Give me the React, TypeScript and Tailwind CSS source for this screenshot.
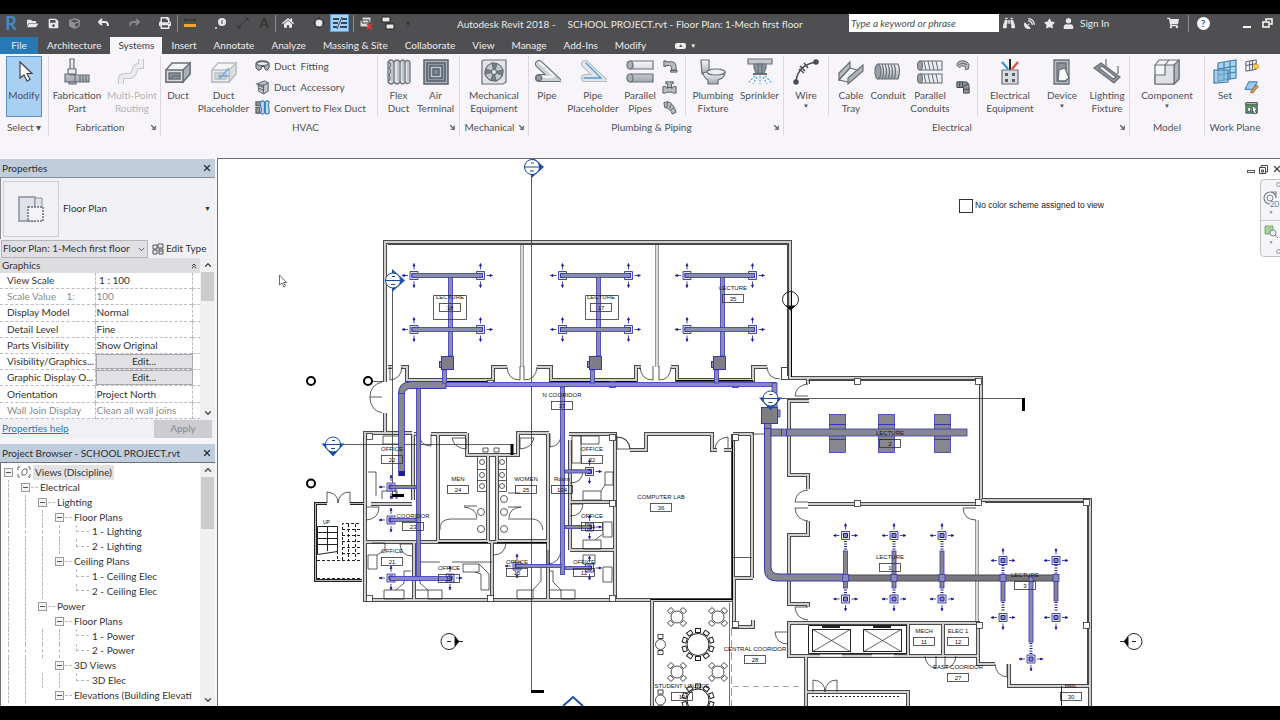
import React from "react";
import { ChevronDown, ChevronUp, ChevronsUp, X } from "lucide-react";
import {
  FaFolderOpen,
  FaSave,
  FaCube,
  FaPrint,
  FaHome,
  FaSatelliteDish,
  FaStar,
  FaUser,
  FaShoppingCart,
  FaBinoculars,
} from "react-icons/fa";

/* ------------------------------------------------------------------ */
/* Ribbon icons                                                        */
/* ------------------------------------------------------------------ */

const INK = "#6a6f77";
const METAL = "url(#metal)";

const icons: Record<string, React.ReactNode> = {
  cursor: <path d="M10 4v16l4-3 3 6 3-1.500-3-6h5z" fill="#fff" stroke="#444" strokeWidth="1.200" />,
  fabrication: (
    <g fill={METAL} stroke={INK} strokeWidth="1.200">
      <path d="M7 1h4v16H7zM2 16h10v8H2zM12 17h14v7H12z" />
      <path d="M5 11h8v5H5zM6 24h7v2H6zM17 17v7M20 17v7M23 17v7" />
    </g>
  ),
  multipoint: (
    <g fill="none">
      <path d="M3 26v-5q0-3 4-3h4q4 0 5-4l1-3q1-3 4-3h2V1" stroke="#c3c5c9" strokeWidth="6" />
      <path d="M3 26v-5q0-3 4-3h4q4 0 5-4l1-3q1-3 4-3h2V1" stroke="#ececf0" strokeWidth="4" />
    </g>
  ),
  duct: (
    <g stroke={INK} strokeWidth="1.400">
      <path d="M2 12 8 5h18v11l-7 8H2z" fill="#f4f5f7" />
      <path d="M19 12l7-7v11l-7 8z" fill="#a9afb7" />
      <path d="M2 12h17v12H2z" fill="#d5d8dd" />
      <path d="M5 15h11v6H5z" fill="#8d949d" />
      <path d="M5 21l4-3h7" fill="none" />
    </g>
  ),
  ductPlaceholder: (
    <g stroke="#babdc2" strokeWidth="1.300">
      <path d="M2 12 8 5h18v11l-7 8H2z" fill="#f4f5f7" />
      <path d="M19 12l7-7v11l-7 8z" fill="#dcdee2" />
      <path d="M2 12h17v12H2z" fill="#e8e9ec" />
      <path d="M5 15h11v6H5z" fill="#d3d6da" />
      <path d="M8 18h11M9 21 19 10" stroke="#6fa6d8" />
    </g>
  ),
  flexDuct: (
    <g stroke={INK} strokeWidth="1.300">
      <path d="M3 4q3-4 6 0 3-4 6 0 3-4 5 0 3-3 5 0v20q-2 3-5 0-2 4-5 0-3 4-6 0-3 4-6 0z" fill="#e1e4e8" />
      <path d="M4 4q3 3 0 6 3 3 0 7 2 3 0 6M9 4v20M15 4v20M20 4v20" fill="none" />
      <path d="M7 4v19M13 4v19M18 4v19M23 4v19" stroke="#b1b6bd" />
    </g>
  ),
  airTerminal: (
    <g stroke="#59616b" strokeWidth="1.500">
      <path d="M2 2h24v24H2z" fill="#a9b1bb" />
      <path d="M5 5h18v18H5z" fill="#8e98a4" />
      <path d="M8 8h12v12H8z" fill="#b9c1ca" />
      <path d="M11 11h6v6h-6z" fill="#7e8894" />
    </g>
  ),
  mechanical: (
    <g stroke={INK} strokeWidth="1.200">
      <path d="M2 3l2-1h22v22l-3 2H2z" fill="#e3e5e9" />
      <circle cx="14" cy="14" r="9" fill="#c3c8ce" />
      <path d="M14 14 12 5l5 1zM14 14l9-2-1 5zM14 14l2 9-5-1zM14 14l-9 2 1-5z" fill="#78818b" />
      <circle cx="14" cy="14" r="2.500" fill="#e8eaed" />
    </g>
  ),
  pipe: (
    <g fill="none" strokeLinecap="round">
      <path d="M6 6 21 20H6" stroke={INK} strokeWidth="8" />
      <path d="M6 6 21 20H6" stroke="#cdd1d6" strokeWidth="6" />
      <path d="M7 5 21 18M6 19h13" stroke="#f5f6f8" strokeWidth="2" />
      <circle cx="6" cy="20" r="3" fill="#9299a1" stroke={INK} />
    </g>
  ),
  pipePlaceholder: (
    <g fill="none" strokeLinecap="round">
      <path d="M6 6 21 20H6" stroke="#b6babf" strokeWidth="8" />
      <path d="M6 6 21 20H6" stroke="#e3e5e9" strokeWidth="6" />
      <path d="M7 5 22 20H5" stroke="#4f9bdc" strokeWidth="1.300" />
    </g>
  ),
  parallelPipes: (
    <g stroke={INK} strokeWidth="1.200">
      <path d="M5 3h22v8H5zM5 16h22v8H5z" fill={METAL} />
      <ellipse cx="4" cy="7" rx="3" ry="4" fill="#aab0b7" />
      <ellipse cx="4" cy="20" rx="3" ry="4" fill="#aab0b7" />
    </g>
  ),
  toilet: (
    <g fill={METAL} stroke={INK} strokeWidth="1.200">
      <path d="M2 2h8v14H3z" />
      <path d="M8 14h18q0 6-7 8v4H9v-4q-4-2-5-7z" />
      <ellipse cx="17" cy="14" rx="9" ry="3" fill="#eef0f2" />
    </g>
  ),
  sprinkler: (
    <g stroke={INK} strokeWidth="1.200">
      <path d="M2 1h24v5H2z" fill="#c6cad0" />
      <path d="M8 6h12v4l-2 5h-8l-2-5zM12 6v10M16 6v10" fill="#8d949d" />
      <path d="M7 16h14" strokeWidth="2" />
      <path d="m9 18-7 7M11 19l-4 7M14 18v8M17 19l4 7M19 18l7 7" stroke="#4f9bdc" strokeDasharray="2 1.500" />
    </g>
  ),
  wire: (
    <g fill="none" stroke="#484c52" strokeWidth="1.500">
      <path d="M4 23Q6 7 24 4" />
      <path d="m7 11 5 4M8 8l5 5M12 5l4 5" />
      <circle cx="4" cy="24" r="2" fill="#484c52" />
      <circle cx="24" cy="4" r="2" fill="#484c52" />
    </g>
  ),
  cableTray: (
    <g stroke={INK} strokeWidth="1.200">
      <path d="m2 15 11-11v6L2 22z" fill="#b7bcc3" />
      <path d="m2 22 11-12 7 2-9 12z" fill="#f4f5f7" />
      <path d="M11 20 26 7v6L11 26z" fill="#aeb4bb" />
    </g>
  ),
  conduit: (
    <g fill="none" stroke={INK} strokeWidth="1.200">
      <path d="M4 6h20q3 7 0 15H4z" fill={METAL} />
      <path d="M8 6q3 8 0 15M11 6q3 8 0 15M14 6q3 8 0 15M17 6q3 8 0 15M20 6q3 8 0 15" />
      <ellipse cx="4" cy="13.500" rx="3" ry="7.500" fill="#9aa1a9" />
    </g>
  ),
  parallelConduits: (
    <g fill="none" stroke={INK} strokeWidth="1.100">
      <path d="M4 3h22v9H4zM4 16h22v9H4z" fill="#eceef1" />
      <path d="M8 3l2 9M12 3l2 9M16 3l2 9M20 3l2 9M8 16l2 9M12 16l2 9M16 16l2 9M20 16l2 9" />
      <ellipse cx="4" cy="7.500" rx="2.500" ry="4.500" fill="#9aa1a9" />
      <ellipse cx="4" cy="20.500" rx="2.500" ry="4.500" fill="#9aa1a9" />
    </g>
  ),
  electrical: (
    <g strokeWidth="1.200">
      <path d="M14 12V1" stroke="#222" strokeWidth="2" />
      <path d="M12 11 6 4" stroke="#2f8fe0" strokeWidth="2" />
      <path d="m16 11 6-7" stroke="#e03d30" strokeWidth="2" />
      <path d="M6 12h16v14H6z" fill="#d9dce0" stroke={INK} />
      <path d="M9 15h3v3H9zM16 15h3v3h-3zM9 21h3v3H9zM16 21h3v3h-3z" fill="#59616b" />
    </g>
  ),
  device: (
    <g stroke={INK} strokeWidth="1.300">
      <path d="M6 2h15v24H6z" fill="#b8bdc4" />
      <path d="M9 5h9v18H9z" fill="#8a919a" />
      <path d="m11 12 6-2 4 10-4 3h-7z" fill="#fafafa" />
    </g>
  ),
  lighting: (
    <g stroke={INK} strokeWidth="1.200">
      <path d="M13 1v8M25 8v8" />
      <path d="M1 10 8 5l19 14-6 6z" fill="#8e959d" />
      <path d="m6 10 3-2 14 11-3 2z" fill="#f4f5f7" />
    </g>
  ),
  component: (
    <g stroke={INK} strokeWidth="1.200" strokeLinejoin="round">
      <path d="M2 7 6 2h20v19l-5 5H2z" fill="#f4f5f7" />
      <path d="M21 7 26 2v19l-5 5z" fill="#b1b6bd" />
      <path d="M12 7h9v19H2v-9h10z" fill="#dfe1e5" />
      <path d="m12 7 4-5M12 7H2" fill="none" />
    </g>
  ),
  workPlane: (
    <g stroke="#3f7fae" strokeWidth="1.200">
      <path d="m7 5 18-3v18L7 23z" fill="#a9d3ef" />
      <path d="M7 11l18-3M7 17l18-3M13 4v18M19 3v18" fill="none" />
      <path d="M3 12h14v12l-14 1z" fill="#7fb6dd" fillOpacity="0.6" />
    </g>
  ),
};

const smallIcons: Record<string, React.ReactNode> = {
  ductFitting: (
    <g fill="#a7adb4" stroke="#444950">
      <path d="M1 6q0-3 7-3t7 3v4q-1 3-3 3-2-1-2-4H7q0 3-2 4-3 0-4-3z" />
      <ellipse cx="8" cy="6" rx="6" ry="2" fill="#f0f1f3" />
    </g>
  ),
  ductAccessory: (
    <g fill="#c0c5cb" stroke="#555a61">
      <path d="m3 5 7-3 4 2v9l-5 3-5-3z" />
      <path d="M4 7l5 2M4 10l5 2M9 6v9M1 5l8 2 5-3" fill="none" />
    </g>
  ),
  convertFlex: (
    <g strokeWidth="1.200">
      <path d="M1 2h5v4H1zM1 8h4v6H1z" fill="#9299a1" stroke="#555a61" />
      <path d="M6 2q2-2 4 0v12q-2 2-4 0l1-4-1-4zM11 2q2-2 4 0l-1 4 1 4v4q-2 2-4 0z" fill="#bcdcf3" stroke="#3f7fae" />
    </g>
  ),
  pipeFitting: <path d="M2 3h2v1h6q5 0 5 6v3h-5v-3q0-2-2-2H4v1H2zM9 13h7v2H9z" fill="#b7bcc2" stroke="#555a61" />,
  pipeAccessory: <path d="M1 8h3l1 2h1V5H4V3h8v2h-2v5h1l1-2h3v7h-3l-1-1H5l-1 1H1zM5 9h6" fill="#b7bcc2" stroke="#555a61" />,
  flexPipe: <path d="M2 3q5-3 9 2 3 4 4 8l-4 2Q9 9 3 8zM6 2 5 8M10 4 8 9M13 8l-4 3" fill="#b7bcc2" stroke="#555a61" />,
  cableFitting: <path d="M2 8q0-5 6-5t7 5l-1 4h-3V9q-4-2-6 1zM4 7q4-3 9 0" fill="#b7bcc2" stroke="#555a61" />,
  conduitFitting: <path d="M2 3h8q5 0 5 5v7H9V9H2zM5 3v6M8 3v6M9 11h6M9 8l5-3" fill="#8c939b" stroke="#3f444a" />,
  showPlane: (
    <g fill="none" stroke="#555a61">
      <path d="m2 4 11-2v10L2 14zM2 8l11-2M6 3v11M9 3v10" fill="#f5f5f5" />
      <circle cx="13" cy="9" r="2.500" fill="#ffd24a" stroke="#c99a1e" />
    </g>
  ),
  refPlane: (
    <g stroke="#2f6fb0">
      <path d="m1 11 4-8h9l-4 8z" fill="#9ccaf0" />
      <path d="m7 14 6-8 2 2-6 7z" fill="#e6a34c" stroke="#8a5a1e" />
    </g>
  ),
  viewer: (
    <g stroke="#444950">
      <path d="M2 3h12v11H2z" fill="#4fa85a" />
      <path d="M2 3h12v2H2z" fill="#ddd" />
      <path d="m9 6 5 4-2 1 1 3-2 1-1-3-1 1zM4 8h3v4H4z" fill="#fff" strokeWidth="0.8" />
    </g>
  ),
};

const Icon = ({ name }: { name: string }) => (
  <svg viewBox="0 0 28 28" className="h-7 w-7 shrink-0" aria-hidden="true">
    {icons[name]}
  </svg>
);

const SmallIcon = ({ name }: { name: string }) => (
  <svg viewBox="0 0 17 17" className="h-4 w-4 shrink-0" aria-hidden="true">
    {smallIcons[name]}
  </svg>
);

/* ------------------------------------------------------------------ */
/* Title bar + tabs                                                    */
/* ------------------------------------------------------------------ */

const QuickButton = ({ label, className, children }: { label: string; className: string; children: React.ReactNode }) => (
  <button type="button" aria-label={label} className={`flex h-[18px] shrink-0 items-center justify-center ${className}`}>
    {children}
  </button>
);

const Divider = () => <span className="h-[17px] w-px shrink-0 bg-[#8a8a8c]" />;

const TitleBar = () => (
  <header className="flex h-[23px] shrink-0 items-start bg-[#4f4f51] text-[#e8e8ea]">
    <div className="flex w-[425px] shrink-0 items-center">
      <QuickButton label="Application menu" className="w-[22px] text-[18px] font-bold text-[#3f8ccb]">R</QuickButton>
      <QuickButton label="Open" className="w-[21px]"><FaFolderOpen size={11} /></QuickButton>
      <QuickButton label="Save" className="w-[21px]"><FaSave size={11} /></QuickButton>
      <QuickButton label="Synchronize" className="w-[21px] text-[#929294]"><FaCube size={11} /></QuickButton>
      <QuickButton label="Undo" className="ml-2 w-[22px]">
        <svg viewBox="0 0 12 12" className="h-3 w-3"><path d="M4 2 1 5l3 3M1 5h6q3 0 3 4" fill="none" stroke="currentColor" strokeWidth="2" /></svg>
      </QuickButton>
      <QuickButton label="Redo" className="ml-2 w-[22px] text-[#858587]">
        <svg viewBox="0 0 12 12" className="h-3 w-3"><path d="m8 2 3 3-3 3M11 5H5Q2 5 2 9" fill="none" stroke="currentColor" strokeWidth="2" /></svg>
      </QuickButton>
      <QuickButton label="Print" className="ml-2 w-[24px]"><FaPrint size={12} /></QuickButton>
      <Divider />
      <QuickButton label="Measure" className="w-[24px]">
        <svg viewBox="0 0 12 12" className="h-3 w-3">
          <path d="M1 3h10M1 1v4M11 1v4" stroke="#333" />
          <path d="M0 7h12v3H0z" fill="#f2a52b" />
        </svg>
      </QuickButton>
      <QuickButton label="Tag" className="ml-2 w-[22px]">
        <svg viewBox="0 0 12 12" className="h-3 w-3"><circle cx="7" cy="5" r="4" fill="currentColor" /><path d="M7 3v4" stroke="#444" /><circle cx="1" cy="11" r="1" fill="currentColor" /></svg>
      </QuickButton>
      <QuickButton label="Detail line" className="w-[21px] text-[#333335]">
        <svg viewBox="0 0 12 12" className="h-3 w-3"><path d="M1 11 11 1M1 8v3h3M8 1h3v3" fill="none" stroke="currentColor" /></svg>
      </QuickButton>
      <QuickButton label="Text" className="w-[22px] text-sm font-bold text-[#343436]">A</QuickButton>
      <Divider />
      <QuickButton label="Default 3D view" className="w-[24px]"><FaHome size={12} /></QuickButton>
      <QuickButton label="Section" className="ml-2 w-[22px]">
        <svg viewBox="0 0 12 12" className="h-3 w-3"><path d="m6 0 6 6-6 6-6-6z" fill="#2e2e30" /><circle cx="6" cy="6" r="3.500" fill="currentColor" /></svg>
      </QuickButton>
      <QuickButton label="Thin lines" className="mr-1 w-[19px] border border-[#5aa0dc] bg-[#a8d0f5]">
        <svg viewBox="0 0 16 14" className="h-3.5 w-4"><path d="M1 3h6M10 3h5M1 7h5M9 7h6M1 11h4M8 11h7" stroke="#34475c" strokeWidth="2" /><path d="M5 13 10 1" stroke="#34475c" /></svg>
      </QuickButton>
      <Divider />
      <QuickButton label="Close hidden windows" className="w-[24px]">
        <svg viewBox="0 0 14 14" className="h-3.5 w-3.5"><path d="M3 1h9v6H3zM1 4h9v7H1z" fill="#ddd" stroke="#444" /><path d="m8 8 5 5M13 8l-5 5" stroke="#e33" strokeWidth="1.600" /></svg>
      </QuickButton>
      <QuickButton label="Switch windows" className="w-[20px]">
        <svg viewBox="0 0 14 14" className="h-3.5 w-3.5"><path d="M1 1h8v5H1zM5 8h8v5H5z" fill="#e8e8ea" stroke="#222" /></svg>
      </QuickButton>
      <span className="ml-2 text-[8px] text-[#2f2f31]">▾</span>
    </div>
    <h1 className="flex flex-1 gap-3 pl-8 text-[10px] leading-[20px] whitespace-pre">
      <span>Autodesk Revit 2018 -</span>
      <span>SCHOOL PROJECT.rvt - Floor Plan: 1-Mech first floor</span>
    </h1>
    <input
      type="search"
      aria-label="Type a keyword or phrase"
      placeholder="Type a keyword or phrase"
      className="h-[18px] w-[150px] shrink-0 bg-white px-0.5 text-[10px] text-gray-700 italic outline-none placeholder:text-[#4c4c4e]"
    />
    <div className="flex w-[281px] shrink-0 items-center">
      <QuickButton label="Search" className="w-[20px]"><FaBinoculars size={12} /></QuickButton>
      <QuickButton label="Communication center" className="w-[20px]"><FaSatelliteDish size={11} /></QuickButton>
      <QuickButton label="Favorites" className="w-[20px]"><FaStar size={11} /></QuickButton>
      <QuickButton label="Sign In" className="gap-1.5 pl-1 text-[10px]"><FaUser size={11} />Sign In</QuickButton>
      <QuickButton label="App store" className="ml-auto w-[24px]"><FaShoppingCart size={12} /></QuickButton>
      <span className="mx-[3px] flex"><Divider /></span>
      <QuickButton label="Help" className="mr-[30px] ml-1 w-[14px]">
        <span className="flex h-[13px] w-[13px] items-center justify-center rounded-full bg-white text-[10px] font-bold text-[#2a5aa8]">?</span>
      </QuickButton>
      <QuickButton label="Minimize" className="w-[14px]"><span className="mt-2 h-[2px] w-2 bg-white" /></QuickButton>
      <QuickButton label="Restore" className="mr-1 ml-1 w-[18px]">
        <svg viewBox="0 0 11 10" className="h-[10px] w-[11px]"><path d="M4 3V1h6v5H8M1 4h6v5H1z" fill="none" stroke="#fff" strokeWidth="1.500" /></svg>
      </QuickButton>
    </div>
  </header>
);

const tabs = ["Architecture", "Systems", "Insert", "Annotate", "Analyze", "Massing & Site", "Collaborate", "View", "Manage", "Add-Ins", "Modify"];

const Tabs = () => (
  <nav className="flex h-[17px] shrink-0 gap-px bg-[#4f4f51] text-[10px] leading-[17px] text-[#ececee]">
    <button type="button" className="w-[38px] bg-[#2878b5]">File</button>
    {tabs.map((tab) => (
      <button
        type="button"
        key={tab}
        className={tab === "Systems" ? "bg-[#f7f5fa] px-2 text-[#3c3c3e]" : "px-2"}
      >
        {tab}
      </button>
    ))}
    <button type="button" aria-label="Ribbon display" className="ml-5 flex items-center gap-1">
      <span className="flex h-[6px] w-[11px] items-center justify-center rounded-xs bg-[#ececee] text-[5px] text-[#4f4f51]">▲</span>
      <span className="text-[6px]">▼</span>
    </button>
  </nav>
);

/* ------------------------------------------------------------------ */
/* Ribbon                                                              */
/* ------------------------------------------------------------------ */

type ToolProps = { icon: string; lines: string[]; width: string; muted?: boolean; menu?: boolean };

const Tool = ({ icon, lines, width, muted, menu }: ToolProps) => (
  <button
    type="button"
    className={`flex h-[62px] shrink-0 flex-col items-center pt-0.5 leading-[13px] ${width} ${muted ? "text-[#b4b4b8]" : ""}`}
  >
    <Icon name={icon} />
    <span className="mt-[3px] whitespace-nowrap">{lines[0]}</span>
    {lines[1] && <span className="whitespace-nowrap">{lines[1]}</span>}
    {menu && <span className="text-[6px] leading-[8px]">▼</span>}
  </button>
);

const SmallTools = ({ names, width }: { names: string[]; width: string }) => (
  <div className={`flex shrink-0 flex-col items-center gap-[5px] pt-0.5 ${width}`}>
    {names.map((name) => (
      <button type="button" key={name} aria-label={name}>
        <SmallIcon name={name} />
      </button>
    ))}
  </div>
);

const Split = () => <span className="mx-1 h-[60px] w-px shrink-0 bg-[#dcdae0]" />;

const Panel = ({ title, width, launcher, children }: { title: string; width: string; launcher?: boolean; children: React.ReactNode }) => (
  <section className={`flex h-[80px] shrink-0 flex-col border-r border-[#dcdae0] ${width}`}>
    <div className="flex h-[62px]">{children}</div>
    <div className="flex h-[18px] items-center">
      <h2 className="flex-1 text-center whitespace-nowrap">{title}</h2>
      {launcher && (
        <button type="button" aria-label={`${title} settings`} className="w-[9px]">
          <svg viewBox="0 0 6 6" className="h-[5px] w-[5px]"><path d="m0 0 4 4M5 1v4H1" fill="none" stroke="#444" strokeWidth="1.300" /></svg>
        </button>
      )}
    </div>
  </section>
);

const Ribbon = () => (
  <div className="flex h-[104px] shrink-0 overflow-hidden bg-[#f7f5fa] pt-0.5 text-[10px] text-[#505054]">
    <Panel title="Select  ▾" width="w-[49px]">
      <button type="button" className="ml-1.5 flex h-[61px] w-9 flex-col items-center border border-[#5790c4] bg-[#a9cff2] pt-px leading-[13px]">
        <Icon name="cursor" />
        <span className="mt-[3px]">Modify</span>
      </button>
    </Panel>
    <Panel title="Fabrication" width="w-[112px]" launcher>
      <Tool icon="fabrication" lines={["Fabrication", "Part"]} width="w-[56px]" />
      <Tool icon="multipoint" lines={["Multi-Point", "Routing"]} width="w-[54px]" muted />
    </Panel>
    <Panel title="HVAC" width="w-[299px]" launcher>
      <Tool icon="duct" lines={["Duct"]} width="w-[34px]" />
      <Tool icon="ductPlaceholder" lines={["Duct", "Placeholder"]} width="w-[57px]" />
      <div className="flex w-[121px] shrink-0 flex-col gap-[5px] pt-0.5 pl-[3px] whitespace-pre">
        <button type="button" className="flex h-4 items-center gap-[3px]"><SmallIcon name="ductFitting" />Duct  Fitting</button>
        <button type="button" className="flex h-4 items-center gap-[3px]"><SmallIcon name="ductAccessory" />Duct  Accessory</button>
        <button type="button" className="flex h-4 items-center gap-[3px]"><SmallIcon name="convertFlex" />Convert to Flex Duct</button>
      </div>
      <Split />
      <Tool icon="flexDuct" lines={["Flex", "Duct"]} width="w-[33px]" />
      <Tool icon="airTerminal" lines={["Air", "Terminal"]} width="w-[41px]" />
    </Panel>
    <Panel title="Mechanical" width="w-[69px]" launcher>
      <Tool icon="mechanical" lines={["Mechanical", "Equipment"]} width="w-[68px]" />
    </Panel>
    <Panel title="Plumbing & Piping" width="w-[255px]" launcher>
      <Tool icon="pipe" lines={["Pipe"]} width="w-[36px]" />
      <Tool icon="pipePlaceholder" lines={["Pipe", "Placeholder"]} width="w-[56px]" />
      <Tool icon="parallelPipes" lines={["Parallel", "Pipes"]} width="w-[38px]" />
      <SmallTools names={["pipeFitting", "pipeAccessory", "flexPipe"]} width="w-[22px]" />
      <Split />
      <Tool icon="toilet" lines={["Plumbing", "Fixture"]} width="w-[46px]" />
      <Tool icon="sprinkler" lines={["Sprinkler"]} width="w-[47px]" />
    </Panel>
    <Panel title="Electrical" width="w-[346px]" launcher>
      <Tool icon="wire" lines={["Wire"]} width="w-[44px]" menu />
      <span className="mr-1 h-[60px] w-px bg-[#dcdae0]" />
      <Tool icon="cableTray" lines={["Cable", "Tray"]} width="w-[36px]" />
      <Tool icon="conduit" lines={["Conduit"]} width="w-[38px]" />
      <Tool icon="parallelConduits" lines={["Parallel", "Conduits"]} width="w-[46px]" />
      <SmallTools names={["cableFitting", "conduitFitting"]} width="w-[20px]" />
      <Split />
      <Tool icon="electrical" lines={["Electrical", "Equipment"]} width="w-[56px]" />
      <Tool icon="device" lines={["Device"]} width="w-[48px]" menu />
      <Tool icon="lighting" lines={["Lighting", "Fixture"]} width="w-[42px]" />
    </Panel>
    <Panel title="Model" width="w-[75px]">
      <Tool icon="component" lines={["Component"]} width="w-[74px]" menu />
    </Panel>
    <section className="flex h-[80px] w-[60px] shrink-0 flex-col">
      <div className="flex h-[62px] pl-1">
        <Tool icon="workPlane" lines={["Set"]} width="w-[32px]" />
        <SmallTools names={["showPlane", "refPlane", "viewer"]} width="w-[22px]" />
      </div>
      <h2 className="h-[18px] text-center leading-[18px] whitespace-nowrap">Work Plane</h2>
    </section>
  </div>
);

/* ------------------------------------------------------------------ */
/* Docked palettes                                                     */
/* ------------------------------------------------------------------ */

const PaletteHeader = ({ title }: { title: string }) => (
  <div className="flex h-[18px] shrink-0 items-center justify-between bg-[#bfcddc] pr-[3px] pl-0.5 text-[10px] text-[#2e2e30]">
    <h2>{title}</h2>
    <button type="button" aria-label={`Close ${title}`}><X size={10} strokeWidth={3} /></button>
  </div>
);

const Scrollbar = ({ thumb }: { thumb: string }) => (
  <div className="flex w-[15px] shrink-0 flex-col items-center justify-between bg-[#f0f0f2] text-[#444]">
    <div className="flex w-full flex-col items-center">
      <ChevronUp size={10} strokeWidth={3} className="my-0.5" />
      <div className={`w-[13px] bg-[#cbcbcd] ${thumb}`} />
    </div>
    <ChevronDown size={10} strokeWidth={3} className="mb-px" />
  </div>
);

const properties = [
  { name: "View Scale", value: " 1 : 100" },
  { name: "Scale Value    1:", value: "100", muted: true },
  { name: "Display Model", value: "Normal" },
  { name: "Detail Level", value: "Fine" },
  { name: "Parts Visibility", value: "Show Original" },
  { name: "Visibility/Graphics...", edit: true },
  { name: "Graphic Display O...", edit: true },
  { name: "Orientation", value: "Project North" },
  { name: "Wall Join Display", value: "Clean all wall joins", muted: true },
];

const Properties = () => (
  <section className="flex shrink-0 flex-col bg-[#f1f0f4] text-[10px] text-[#333]">
    <PaletteHeader title="Properties" />
    <div className="flex h-[62px] items-center gap-1 border-t border-l border-[#8b8b92] pl-0.5">
      <div className="flex h-14 w-14 items-center justify-center border border-[#d0d0d4]">
        <svg viewBox="0 0 28 28" className="h-7 w-7">
          <path d="M2 2h16v24H2z" fill="#dfe2ea" stroke="#8c8f96" strokeWidth="1.500" />
          <path d="M18 3h7v10h-7z" fill="#dfe2ea" stroke="#8c8f96" />
          <path d="M11 12h15v14H11z" fill="#f4f5f8" stroke="#6d7076" strokeWidth="1.500" strokeDasharray="2 1" />
        </svg>
      </div>
      <span className="flex-1">Floor Plan</span>
      <button type="button" aria-label="Change type" className="pr-1 text-[7px]">▼</button>
    </div>
    <div className="flex h-[19px] items-center gap-1 pl-px">
      <div className="relative w-[147px]">
        <select aria-label="View" className="h-[18px] w-full appearance-none border border-[#b5b5b9] bg-[#e0dfe3] pl-px text-[10px] outline-none">
          <option>Floor Plan: 1-Mech first floor</option>
        </select>
        <ChevronDown size={9} className="pointer-events-none absolute top-[5px] right-0.5" />
      </div>
      <button type="button" className="flex items-center gap-0.5 whitespace-nowrap">
        <svg viewBox="0 0 12 12" className="h-3 w-3"><path d="M1 2h4v4H1zM1 7h4v4H1zM6 1h5v4H6zM7 6h4v5H7zM7 8h4" fill="#e9eaee" stroke="#555" /></svg>
        Edit Type
      </button>
    </div>
    <div className="flex">
      <div className="min-w-0 flex-1">
        <div className="flex h-[15px] items-center justify-between bg-[#dddde0] px-0.5">
          <h3>Graphics</h3>
          <ChevronsUp size={8} strokeWidth={3} />
        </div>
        <div className="h-[146px] overflow-hidden bg-white">
          <table className="h-full w-full table-fixed border-collapse leading-[13px] whitespace-nowrap">
            <tbody>
              {properties.map((row) => (
                <tr key={row.name} className={`border-b border-dashed border-[#bcbcc0] ${row.muted ? "text-[#8a8a8e]" : ""}`}>
                  <th scope="row" className="w-[95px] overflow-hidden border-r border-dashed border-[#bcbcc0] p-0 pl-[7px] text-left font-normal whitespace-pre">{row.name}</th>
                  <td className="border-r border-dashed border-[#bcbcc0] p-0 pl-px whitespace-pre">
                    {row.edit ? (
                      <button type="button" className="block h-[13px] w-full bg-[#e1e1e4] leading-[13px] outline outline-[#a9a9ad]">Edit...</button>
                    ) : (
                      row.value
                    )}
                  </td>
                  <td className="w-[8px] p-0" />
                </tr>
              ))}
            </tbody>
          </table>
        </div>
      </div>
      <Scrollbar thumb="h-[29px]" />
    </div>
    <div className="flex h-[19px] items-center justify-between pr-[3px] pl-0.5">
      <a href="#help" className="text-[#2b77b5] underline">Properties help</a>
      <button type="button" disabled className="h-[18px] w-[58px] bg-[#cdccd0] text-[#8a8a8e]">Apply</button>
    </div>
  </section>
);

// guides: "|" draws the ancestor line in that column, " " leaves it empty
const tree = [
  { label: "Views (Discipline)", guides: "", root: true },
  { label: "Electrical", guides: "|" },
  { label: "Lighting", guides: "||" },
  { label: "Floor Plans", guides: "|||" },
  { label: "1 - Lighting", guides: "||||", leaf: true },
  { label: "2 - Lighting", guides: "||||", leaf: true },
  { label: "Ceiling Plans", guides: "|||" },
  { label: "1 - Ceiling Elec", guides: "||| ", leaf: true },
  { label: "2 - Ceiling Elec", guides: "||| ", leaf: true },
  { label: "Power", guides: "||" },
  { label: "Floor Plans", guides: "|| |".slice(0, 3) },
  { label: "1 - Power", guides: "||||", leaf: true },
  { label: "2 - Power", guides: "||||", leaf: true },
  { label: "3D Views", guides: "|| " },
  { label: "3D Elec", guides: "||||", leaf: true },
  { label: "Elevations (Building Elevati", guides: "|| " },
];

const ProjectBrowser = () => (
  <section className="flex min-h-0 flex-1 flex-col text-[10px] text-[#333]">
    <PaletteHeader title="Project Browser - SCHOOL PROJECT.rvt" />
    <div className="flex min-h-0 flex-1 border-t border-l border-[#6f6f76] bg-white">
      <div className="min-w-0 flex-1 overflow-hidden pt-0.5">
        <ul className="grid h-[238px] auto-rows-fr pl-[3px]">
          {tree.map((row, i) => (
            <li key={i} className="flex items-center whitespace-nowrap">
              {row.guides.split("").map((g, j) => (
                <span key={j} className="flex h-full w-[17px] shrink-0 pl-1">
                  {g === "|" && <span className="h-full border-l border-dashed border-[#b8b8b8]" />}
                </span>
              ))}
              {row.leaf ? (
                <span className="mr-0.5 ml-1 h-full w-[13px] shrink-0">
                  <span className="block h-1/2 border-b border-l border-dashed border-[#b8b8b8]" />
                </span>
              ) : (
                <>
                  <button type="button" aria-label={`Collapse ${row.label}`} className="flex h-[9px] w-[9px] shrink-0 items-center justify-center border border-[#9a9a9e] bg-[#f4f4f4]">
                    <span className="h-px w-[5px] bg-[#555]" />
                  </button>
                  {row.root ? (
                    <svg viewBox="0 0 14 12" className="mr-0.5 ml-1 h-3 w-3.5 shrink-0"><path d="M1 4V1h2M11 1h2v3M1 8v3h2M11 11h2V8M5 5l2-2h3v4L8 9H5z" fill="none" stroke="#666" /></svg>
                  ) : (
                    <span className="mx-px w-[7px] border-t border-dashed border-[#b8b8b8]" />
                  )}
                </>
              )}
              <span className={row.root ? "bg-[#e2e2e4] px-0.5" : "px-px"}>{row.label}</span>
            </li>
          ))}
        </ul>
      </div>
      <Scrollbar thumb="h-[52px]" />
    </div>
  </section>
);

/* ------------------------------------------------------------------ */
/* Floor plan drawing                                                  */
/* ------------------------------------------------------------------ */

const NAVY = "#1c1c9c";
const DUCT = "#8a8bb8";
const DUCT_GRAY = "#87878f";
const DUCT_LINE = "#3636b4";

const walls = [
  "M385 382V242H790V378H981V500H1090V706",
  "M385 413V433H365V600H650",
  "M388 367h4M401 367h6V380H493V367h14",
  "M537 367h14V380H636V367h5",
  "M671 367h6V380H753V367h14",
  "M385 433h27M413 434v66M371 504h41M414 434h5",
  "M431 434h36M438 434v107h50V456M467 433v22h51v-22h31",
  "M497 456v85h50M548 433V600",
  "M570 440v110M569 434h46V600M570 502h45M570 550h45",
  "M366 542h48V600M415 542h133M492 542V600",
  "M630 450h16V434h66V450h5M724 450h8",
  "M733 434V600M733 434h19V578M733 578h20",
  "M734 578v49h19V620",
  "M808 378v6M809 401H789v74h19v14",
  "M808 521v14h-19v69h19v3",
  "M808 504h172",
  "M808 623h-19V656h31M789 623h189v41h17M1009 664v22h80",
  "M808 656h170M908 624v31M943 624v31",
  "M652 706V600H732",
  "M806 656v50M805 692h103v14",
];

const Duct = ({ x, y, w, h, gray }: { x: number; y: number; w: number; h: number; gray?: boolean }) => (
  <rect x={x} y={y} width={w} height={h} fill={gray ? DUCT_GRAY : DUCT} stroke={DUCT_LINE} strokeWidth="0.8" />
);

type DiffuserProps = { x: number; y: number; hide?: string };

// square terminal with an arrow on every side that is not fed by a duct
const Diffuser = ({ x, y, hide = "" }: DiffuserProps) => (
  <g transform={`translate(${x} ${y})`} stroke={NAVY} fill={NAVY}>
    <path d="M-4-4h8v8h-8z" fill="#e2e2f6" strokeWidth="0.8" />
    <path d="M-2-2h4v4h-4z" fill={DUCT} />
    {!hide.includes("n") && <path d="M0-6v-4M-1-9.500 0-12l1 2.500z" strokeWidth="0.8" />}
    {!hide.includes("s") && <path d="M0 6v4M-1 9.500 0 12l1-2.500z" strokeWidth="0.8" />}
    {!hide.includes("w") && <path d="M-6 0h-4M-9.500-1-12 0l2.500 1z" strokeWidth="0.8" />}
    {!hide.includes("e") && <path d="M6 0h4M9.500-1 12 0l-2.500 1z" strokeWidth="0.8" />}
  </g>
);

const LectureDucts = ({ left, right, riser, box }: { left: number; right: number; riser: number; box: number }) => (
  <g>
    <Duct x={riser - 2} y={276} w={4} h={80} />
    <Duct x={box + 1.5} y={370} w={4} h={13} />
    <Diffuser x={left} y={275.5} hide="e" />
    <Diffuser x={right} y={275.5} hide="w" />
    <Diffuser x={left} y={329.5} hide="e" />
    <Diffuser x={right} y={329.5} hide="w" />
    <Duct x={left - 2} y={273.5} w={right - left + 4} h={4} />
    <Duct x={left - 2} y={327.5} w={right - left + 4} h={4} />
    <rect x={box + 0.5} y={356.5} width={12} height={13} fill="#7e7e84" stroke={DUCT_LINE} />
    <rect x={box - 1.5} y={361.5} width={2} height={6} fill={DUCT} stroke={DUCT_LINE} />
  </g>
);

type Room = { name: string; num: string; x: number; y: number };

const rooms: Room[] = [
  { name: "LECTURE", num: "18", x: 450, y: 297 },
  { name: "LECTURE", num: "17", x: 601, y: 297 },
  { name: "LECTURE", num: "35", x: 733, y: 288 },
  { name: "N COORIDOR", num: "37", x: 562, y: 395 },
  { name: "OFFICE", num: "22", x: 392, y: 449 },
  { name: "MEN", num: "24", x: 458, y: 479 },
  { name: "WOMEN", num: "25", x: 526, y: 479 },
  { name: "Room", num: "104", x: 562, y: 479 },
  { name: "OFFICE", num: "32", x: 592, y: 449 },
  { name: "OFFICE", num: "14", x: 592, y: 516 },
  { name: "COORIDOR", num: "23", x: 413, y: 516 },
  { name: "OFFICE", num: "21", x: 392, y: 551 },
  { name: "OFFICE", num: "10", x: 449, y: 568 },
  { name: "OFFICE", num: "15", x: 517, y: 562 },
  { name: "OFFICE", num: "12", x: 584, y: 562 },
  { name: "COMPUTER LAB", num: "36", x: 661, y: 497 },
  { name: "STUDENT LOUNGE", num: "19", x: 682, y: 686 },
  { name: "CENTRAL COORIDOR", num: "28", x: 755, y: 649 },
  { name: "LECTURE", num: "2", x: 890, y: 433 },
  { name: "LECTURE", num: "1", x: 890, y: 557 },
  { name: "LECTURE", num: "3", x: 1025, y: 575 },
  { name: "MECH", num: "11", x: 924, y: 631 },
  { name: "ELEC 1", num: "12", x: 958, y: 631 },
  { name: "EAST COORIDOR", num: "27", x: 958, y: 667 },
  { name: "MRL", num: "30", x: 1071, y: 686 },
];

const RoomTag = ({ name, num, x, y }: Room) => (
  <g transform={`translate(${x} ${y})`} textAnchor="middle" fontSize="6" fill="#111">
    <text y="2">{name}</text>
    <rect x="-10.5" y="6.5" width="21" height="8" fill="none" stroke="#333" strokeWidth="0.8" />
    <text y="13">{num}</text>
  </g>
);

// section head: the triangle points down, rotate it for other directions
const SectionMark = ({ x, y, turn }: { x: number; y: number; turn: number }) => (
  <g transform={`translate(${x} ${y})`}>
    <path d="M-11.5-1h23L0 12z" fill="#1d4fa5" transform={`rotate(${turn})`} />
    <circle r="7.5" fill="#fff" stroke="#174a9c" />
    <path d="M-8 0H8M-1-4h3M-2 4h4" stroke="#174a9c" />
  </g>
);

const RoundTable = ({ x, y, r, seats }: { x: number; y: number; r: number; seats: number }) => (
  <g transform={`translate(${x} ${y})`} fill="#fff" stroke="#222" strokeWidth={seats === 10 ? 1 : 0.8}>
    <circle r={r} />
    {Array.from({ length: seats }, (_, i) => (
      <rect key={i} x="-2.5" y={-r - 5} width="5" height="4" transform={`rotate(${(360 / seats) * i + (seats === 4 ? 45 : 0)})`} />
    ))}
  </g>
);

const doors = [
  "M390 367v13q11-1 12-13M507 367q1 13 13 13v-14M537 367q-1 13-13 13v-14",
  "M640 367q1 13 13 13v-14M671 367q-1 13-12 13v-14M767 367q1 12 13 12",
  "M382 382q-12 3-12 15h12M382 413q-12-3-12-16M370 381.500h14",
  "M419 434q1 12 12 12V434M452 438h14v11q-12-1-14-11M534 438h-14v11q12-1 14-11M550 434v13q11-1 11-13",
  "M617 449v-12q12 1 13 12M728 449v-12q-12 1-13 12M617 449h13q-1-12-13-12",
  "M808 384q-12 1-13 12h13M808 490q-12 1-13 12h13M808 521q-12-1-13-13h13M808 620q-12-1-13-13h13",
  "M976 508h-13q1 12 13 12M995 664q1 12 12 13v-13M925 656q1 11 11 12v-12M956 656q-1 11-11 12v-12",
  "M788 632h-13q1 12 13 12M813 692v-12q12 1 12 12q1-12 12-12v12",
  "M327 503v-11q11 1 11 11q1-11 12-11v11M366 507h13q0 12-13 13M412 544h-12q1 12 12 12",
  "M493 543h13q-1 12-13 12M548 550v14q12-1 13-14M570 470h13q0 13-13 13M570 504h13q-1 12-13 12",
  "M440 530q-1-10 10-11M543 530q-1-10-10-11M464 507q12 1 13 11M521 507q-12 1-12 11",
];

const desks = [
  "M368 472h8v24M382 499v-8h14v8M397 499v-8l-6-8M383 436h20v8h-20z",
  "M368 555h9v14h-9zM384 599v-9h20v9zM396 590l8-7v-12h7M372 543h13v7l-8 5",
  "M416 590h12v9h14v-9h-14l-8-7v-12h-4M463 564h16v8h-16zM479 564l10 10v16h-8v-16l-6-2",
  "M517 590h16v9h-16zM533 590l8-9v-14h6M549 590h12v9h14v-9h-14l-8-8v-11h-4",
  "M572 436h9v27h-9zM581 436h18v8h-18zM605 472h8v13h-8zM583 491h18v9h-18zM601 491l4-6",
  "M603 522h9v15h-9zM583 540h18v9h-18zM595 540l8-6M603 567h9v15h-9zM583 555h12v9h-12z",
];

const FloorPlan = () => (
  <svg
    viewBox="218 159 1062 547"
    preserveAspectRatio="xMinYMin slice"
    className="h-full w-full"
    role="img"
    aria-label="Mechanical plan of the first floor"
    fontFamily="'Liberation Sans', Arial, sans-serif"
  >
    {/* partitions */}
    <path d="M522 245V367M657 245V367M977 520V624" stroke="#999" strokeWidth="4" />
    <path d="M522 245V367M657 245V367M977 520V624" stroke="#dadada" strokeWidth="2" />
    <g fill="none" shapeRendering="crispEdges">
      {walls.map((d) => (
        <path key={d} d={d} stroke="#4a4a4a" strokeWidth="4" />
      ))}
      {walls.map((d) => (
        <path key={d} d={d} stroke="#cfcfcf" strokeWidth="2" />
      ))}
      <path d="M387.500 244.500H787.500V376M808 380.500H979V502M985 502.500H1087V684M781 367.500h7v12h-7z" stroke="#444" />
      <path d="M407 381.500h86M550 381.500h86M676 380.500h77M791.500 290v87M732.500 434v166M651 599.500h82M438 542h50M497 542h50" stroke="#000" />
    </g>

    <g fill="none" stroke="#333" strokeWidth="0.8">
      {doors.map((d) => <path key={d} d={d} />)}
      {desks.map((d) => <path key={d} d={d} />)}
      <path d="M392.500 288V499M343 444.500H512M531.500 175V690M779 398.500H1024M733 557.500h19M752 434h12M415 562h25M452 562h40" />
    </g>

    {/* structural columns */}
    <g fill="#fff" stroke="#333" strokeWidth="0.8">
      {[[487, 380], [609, 381], [732, 381], [854, 378], [975, 378], [854, 500], [975, 499], [1083, 499], [1083, 622], [366, 433], [366, 595], [487, 595], [609, 434], [609, 595], [609, 500], [732, 434], [732, 621], [976, 622]].map(([x, y]) => (
        <rect key={`${x}-${y}`} x={x + 0.5} y={y + 0.5} width="6" height="6" />
      ))}
    </g>
    <g fill="#fff" stroke="#000" strokeWidth="2">
      <circle cx="311" cy="381" r="4" />
      <circle cx="368" cy="381" r="4" />
      <circle cx="311" cy="483.5" r="4" />
    </g>

    {/* west stair */}
    <g fill="none" stroke="#222">
      <path d="M327 503.500H315.500V580.500H362M350 503.500h14" strokeWidth="3" />
      <path d="M327 503.500H315.500V580.500H362M350 503.500h14" stroke="#bbb" />
      <path d="M317.500 526.500h20v25l-20 3zM317 532.500h20M317 538.500h20M317 544.500h20M327.500 526v25" />
      <path d="M342.500 560v-36.500h18M348.500 524v36M317 560.500h45M342 529.500h19M342 535.500h19M342 541.500h19M342 547.500h19M342 553.500h19M355.500 524v36" strokeDasharray="3 2" />
      <path d="M317 578.500h45M337.500 551v9" strokeDasharray="3 2" />
    </g>
    <text x="323" y="524" fontSize="5">UP</text>

    {/* washroom fixtures */}
    <g fill="#fff" stroke="#333" strokeWidth="0.8">
      <path d="M477.500 456.500h9v35h-9zM498.500 456.500h8v35h-8zM477 469.500h9M477 480.500h9M498 469.500h8M498 480.500h8" />
      {[[482, 462], [482, 475], [482, 486], [502, 462], [502, 475], [502, 486]].map(([x, y]) => (
        <circle key={`${x}-${y}`} cx={x} cy={y} r="2.5" />
      ))}
      {[[481, 512], [481, 529], [504, 499], [504, 512], [504, 529]].map(([x, y]) => (
        <circle key={`${x}-${y}`} cx={x} cy={y} r="3.5" />
      ))}
      <path d="M464 506h13M508 493h12M508 507h13M450 519h27M508 519h25M483 448h5v4h-5zM494 448h5v4h-5z" />
    </g>
    <path d="M512 444v11M392 495.500h12" stroke="#000" strokeWidth="3" />

    {/* elevators */}
    <g fill="none" stroke="#222">
      <path d="M808.500 625.500h98v28h-98z" />
      <path d="M812.500 629.500h38v22h-38zM863.500 629.500h38v22h-38z" />
      <path d="M812 629l39 23M851 629l-39 23M863 629l39 23M902 629l-39 23" strokeWidth="0.7" />
      <path d="M822 627h18M873 627h18" strokeWidth="2" />
      <path d="M820 655.500h22M872 655.500h22" stroke="#fff" strokeWidth="2" />
      <path d="M845 696.500h55M812 696.500h30" strokeDasharray="2 2" />
      <path d="M1061.500 686v20" />
    </g>

    {/* student lounge */}
    <path d="M729.500 603V706" stroke="#8a6a6a" />
    <path d="M731.500 628V706" stroke="#58b5a8" strokeDasharray="8 4" />
    <path d="M733 686.500h68" stroke="#aaa" strokeDasharray="6 4" />
    <RoundTable x={698} y={644.5} r={11} seats={10} />
    <RoundTable x={698} y={700} r={11} seats={10} />
    <RoundTable x={677} y={617} r={6} seats={4} />
    <RoundTable x={718} y={617} r={6} seats={4} />
    <RoundTable x={677} y={672} r={6} seats={4} />
    <RoundTable x={718} y={672} r={6} seats={4} />
    <RoundTable x={660.5} y={644.5} r={5} seats={2} />
    <RoundTable x={660.5} y={700} r={5} seats={2} />

    {/* main ducts */}
    <Duct x={445} y={382.5} w={331} h={4} />
    <Duct x={772} y={383} w={5} h={26} />
    <path d="M446 381.500H411Q398.500 382 398.500 393.500H404.500Q405 388.500 411 388.500H446Z" fill={DUCT_GRAY} stroke={DUCT_LINE} />
    <Duct x={398.5} y={393.5} w={6} h={82} gray />
    <path d="M399 471h6v5h-6z" fill={NAVY} />
    <Duct x={416.5} y={388.5} w={4} h={192} gray />
    <Duct x={560.5} y={387.5} w={4} h={187} />
    <LectureDucts left={414} right={480.5} riser={450.5} box={441} />
    <LectureDucts left={562.5} right={628.5} riser={598.5} box={589} />
    <LectureDucts left={687} right={752.5} riser={722.5} box={713} />

    {/* office branches */}
    <Diffuser x={391} y={487} hide="e" />
    <Diffuser x={391} y={520} hide="e" />
    <Diffuser x={391} y={578} hide="e" />
    <Diffuser x={450} y={578} hide="w" />
    <Diffuser x={589.5} y={471.5} hide="w" />
    <Diffuser x={589.5} y={527} hide="w" />
    <Diffuser x={589.5} y={568} hide="w" />
    <Diffuser x={517} y={566} hide="e" />
    <Duct x={390} y={485.5} w={26} h={3} gray />
    <Duct x={390} y={518.5} w={26} h={3} />
    <Duct x={390} y={576.5} w={61} h={4} />
    <Duct x={565} y={470} w={26} h={3} />
    <Duct x={565} y={525.5} w={26} h={3} gray />
    <Duct x={516} y={564.5} w={45} h={3} />
    <Duct x={565} y={566.5} w={26} h={3} />

    {/* east wing */}
    <rect x="761.5" y="407.5" width="16" height="16" fill="#7e7e84" stroke={DUCT_LINE} />
    <Duct x={777.5} y={410} w={2.5} h={7} />
    <path d="M764.500 423.500v146q0 11.500 12.500 11.500h68v-7h-66q-8 0-8-7V423.500z" fill={DUCT_GRAY} stroke={DUCT_LINE} />
    <Duct x={829.5} y={414.5} w={16} h={38} gray />
    <Duct x={878.5} y={414.5} w={16} h={38} gray />
    <Duct x={934.5} y={414.5} w={16} h={38} gray />
    <Duct x={771} y={429} w={196} h={7} gray />
    <path d="M829 424.500h17M829 439.500h17M878 424.500h17M878 439.500h17M934 424.500h17M934 439.500h17M781.500 429v7M786.500 429v7M765 428.500h6" stroke={DUCT_LINE} />
    <rect x="845" y="575" width="212" height="6" fill="#77777d" stroke="#4a4a55" />
    {[845.5, 894, 942].map((x) => (
      <g key={x}>
        <path d={`M${x} 541v10M${x} 587v8`} stroke={NAVY} strokeWidth="3" strokeDasharray="1 1.500" />
        <Duct x={x - 2} y={551} w={4} h={24} gray />
        <Duct x={x - 2} y={581} w={4} h={7} gray />
        <Duct x={x - 3} y={574.5} w={6} h={7} />
        <Diffuser x={x} y={535.5} hide="s" />
        <Diffuser x={x} y={599} hide="n" />
      </g>
    ))}
    {[1003, 1056].map((x) => (
      <g key={x}>
        <path d={`M${x} 565v10M${x} 602v10`} stroke={NAVY} strokeWidth="3" strokeDasharray="1 1.500" />
        <Duct x={x - 2} y={581} w={4} h={20} gray />
        <Duct x={x - 3} y={574.5} w={6} h={7} />
        <Diffuser x={x} y={560.5} hide="s" />
        <Diffuser x={x} y={617.5} hide="n" />
      </g>
    ))}
    <Duct x={1029} y={577} w={4} h={65} />
    <path d="M1031 643v11" stroke={NAVY} strokeWidth="3" strokeDasharray="1 1.500" />
    <Diffuser x={1031} y={659} hide="n" />

    {rooms.map((room) => <RoomTag key={`${room.x}-${room.y}`} {...room} />)}
    <path d="M433.500 295.500h33v24h-33zM585.500 295.500h33v24h-33z" fill="none" stroke="#333" strokeWidth="0.8" />

    {/* section and elevation marks */}
    <SectionMark x={532} y={167} turn={-90} />
    <SectionMark x={393} y={280.5} turn={-90} />
    <SectionMark x={333} y={444.5} turn={0} />
    <SectionMark x={770.5} y={398.5} turn={0} />
    <path d="M563 706 573 697l10 9" fill="#fff" stroke="#1d4fa5" strokeWidth="2" />
    <path d="M531 691.500h13M1023.500 398v13" stroke="#000" strokeWidth="3" />
    <g fill="none" stroke="#222">
      <circle cx="790.5" cy="299.5" r="8" />
      <circle cx="449" cy="641.5" r="8" />
      <circle cx="1134" cy="641.5" r="8" />
      <path d="M786 306h9l-4.500 4zM455 637v9l4-4.500zM1128 637v9l-4-4.500z" fill="#000" />
      <path d="M447 641.500h4M1132 641.500h4M458 641.500h5M1120 641.500h5" />
    </g>

    <rect x="959.5" y="199.5" width="13" height="13" fill="#fff" stroke="#333" />
    <text x="975" y="208" fontSize="8.5" fill="#222">No color scheme assigned to view</text>
    <path d="M279.500 275v10l2.500-2 2 4 1.500-1-2-3.500h3z" fill="#fff" stroke="#444" strokeWidth="0.8" />
  </svg>
);

const NavigationBar = () => (
  <div className="absolute top-[20px] -right-1.5 flex h-[78px] w-[26px] flex-col items-center justify-between rounded-sm border border-[#c0c0c6] bg-[#f5f4f8] py-0.5 text-[#8b8b90]">
    <span className="mr-1 h-[5px] w-[5px] self-end rounded-full border border-[#999]" />
    <button type="button" aria-label="Steering wheel" className="mr-1 flex flex-col items-center">
      <svg viewBox="0 0 18 18" className="h-[18px] w-[18px]">
        <path d="M8 14a6 6 0 1 1 6-6V2H8" fill="#eef2f8" stroke="#7b8794" strokeWidth="1.200" />
        <circle cx="8" cy="8" r="3" fill="none" stroke="#7b8794" />
        <text x="8" y="17" fontSize="7" fill="#3f7fae">2D</text>
      </svg>
      <span className="text-[5px] leading-[8px]">▼</span>
    </button>
    <span className="h-px w-full bg-[#ccc]" />
    <button type="button" aria-label="Zoom in region" className="mr-1 flex flex-col items-center">
      <svg viewBox="0 0 14 14" className="h-3.5 w-3.5">
        <path d="M1 2h8v8H1z" fill="#a5cf9a" stroke="#7fae74" />
        <circle cx="9" cy="9" r="3" fill="#eef2f8" stroke="#7b8794" />
        <path d="m11 11 3 3" stroke="#7b8794" />
      </svg>
      <span className="text-[5px] leading-[8px]">▼</span>
    </button>
    <span className="mr-1 h-[5px] w-[5px] self-end rounded-full border border-[#999]" />
  </div>
);

const Canvas = () => (
  <main className="relative min-w-0 flex-1 overflow-hidden border-t border-l border-[#6d6d74] bg-white">
    <FloorPlan />
    <div className="absolute top-[5px] -right-0.5 flex items-center gap-1 text-[#444]">
      <button type="button" aria-label="Minimize view"><span className="mt-1 block h-[3px] w-2 border border-[#555]" /></button>
      <button type="button" aria-label="Restore view">
        <svg viewBox="0 0 9 9" className="h-[9px] w-[9px]"><path d="M2 2V.5h6.500V7H7M.5 2.500h6v6h-6zM2.500 5h2v2h-2z" fill="none" stroke="currentColor" /></svg>
      </button>
      <button type="button" aria-label="Close view"><X size={10} strokeWidth={3} /></button>
    </div>
    <NavigationBar />
  </main>
);

export default function App() {
  return (
    <div className="flex h-screen min-h-[480px] flex-col overflow-hidden bg-black py-[14px] font-['Lato','Open_Sans',sans-serif]">
      <svg className="absolute h-0 w-0" aria-hidden="true">
        <defs>
          <linearGradient id="metal" x1="0" y1="0" x2="0" y2="1">
            <stop offset="0" stopColor="#f7f8fa" />
            <stop offset="1" stopColor="#a3a9b1" />
          </linearGradient>
        </defs>
      </svg>
      <TitleBar />
      <Tabs />
      <Ribbon />
      <div className="flex min-h-0 flex-1 bg-[#f7f5fa]">
        <aside className="flex w-[217px] shrink-0 flex-col gap-[6px] overflow-hidden pt-px pr-0.5">
          <Properties />
          <ProjectBrowser />
        </aside>
        <Canvas />
      </div>
    </div>
  );
}
